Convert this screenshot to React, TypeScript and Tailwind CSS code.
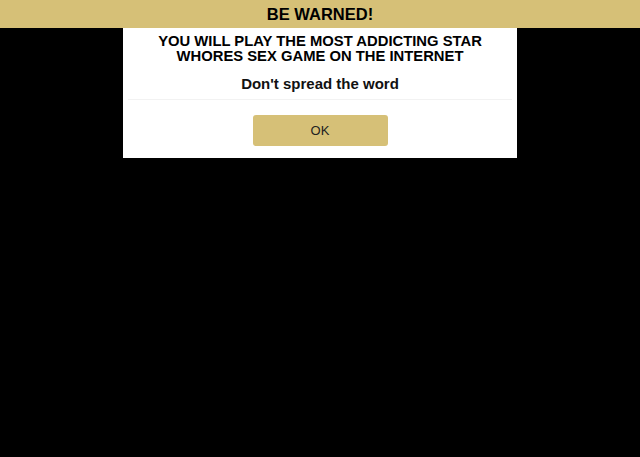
export default function App() {
  return (
    <div className="w-[640px] h-[457px] bg-black overflow-hidden" style={{ fontFamily: '"Liberation Sans", Arial, sans-serif' }}>
      <div className="h-[28px] bg-[#d6c077] flex items-center justify-center">
        <span className="text-[16.5px] font-bold text-black leading-none">BE WARNED!</span>
      </div>
      <div className="mx-auto w-[394px] bg-white flex flex-col items-center pt-[6px] pb-[12px]">
        <div className="text-[14.8px] font-bold text-black text-center leading-[15px] px-4">
          <div>YOU WILL PLAY THE MOST ADDICTING STAR</div>
          <div>WHORES SEX GAME ON THE INTERNET</div>
        </div>
        <div className="mt-[11px] text-[15px] font-bold text-[#111] leading-[18px]">Don't spread the word</div>
        <div className="mt-[6px] w-[384px] h-px bg-[#f2f2f2]"></div>
        <button className="mt-[15px] w-[135px] h-[31px] rounded-[3px] bg-[#d6c077] text-[13px] text-[#222]">OK</button>
      </div>
    </div>
  );
}
